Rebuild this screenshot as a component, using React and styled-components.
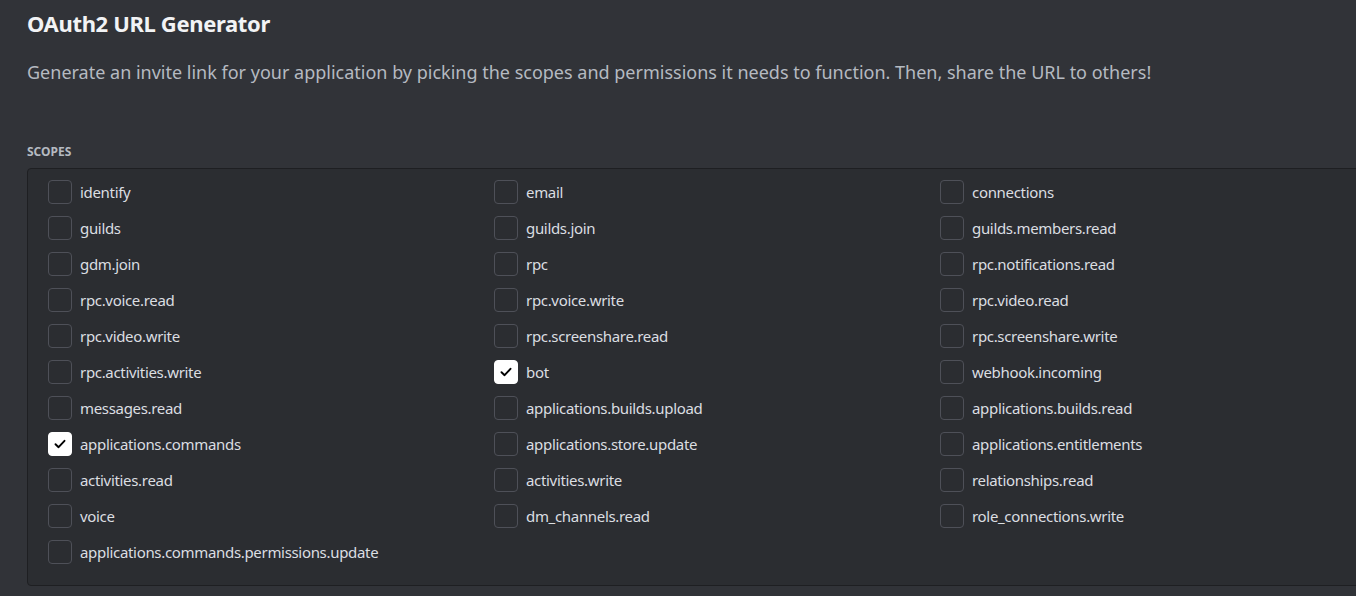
import React from 'react';
import styled, { createGlobalStyle } from 'styled-components';

const GlobalStyle = createGlobalStyle`
  html, body {
    margin: 0;
    background: #313338;
    overflow: hidden;
  }
  body {
    font-family: "Noto Sans", "Open Sans", sans-serif;
  }
`

const Page = styled.div`
  width: 1400px;
  min-height: 596px;
  padding: 9px 0 0 27px;
  box-sizing: border-box;
  background: #313338;
`

const Title = styled.h1`
  margin: 0;
  font-size: 22px;
  line-height: 28px;
  font-weight: 700;
  letter-spacing: -0.35px;
  color: #f2f3f5;
`

const Description = styled.p`
  margin: 23px 0 0;
  font-size: 18px;
  line-height: 24px;
  color: #b5bac1;
`

const SectionLabel = styled.h2`
  margin: 60px 0 8px;
  font-size: 12px;
  line-height: 16px;
  font-weight: 700;
  text-transform: uppercase;
  color: #b5bac1;
`

const ScopeBox = styled.div`
  display: grid;
  grid-template-columns: repeat(3, 446px);
  row-gap: 12px;
  padding: 11px 20px 21px;
  background: #2b2d31;
  border: 1px solid #1e1f22;
  border-radius: 4px;
`

const Scope = styled.label`
  display: flex;
  align-items: center;
  gap: 8px;
  height: 24px;
  font-size: 15px;
  letter-spacing: -0.32px;
  color: #dbdee1;
  cursor: pointer;
`

const Box = styled.span`
  display: flex;
  align-items: center;
  justify-content: center;
  width: 24px;
  height: 24px;
  box-sizing: border-box;
  border-radius: 4px;
  border: 1px solid ${p => (p.$checked ? '#ffffff' : '#4e5058')};
  background: ${p => (p.$checked ? '#ffffff' : 'transparent')};
`

const scopes = [
  'identify', 'email', 'connections',
  'guilds', 'guilds.join', 'guilds.members.read',
  'gdm.join', 'rpc', 'rpc.notifications.read',
  'rpc.voice.read', 'rpc.voice.write', 'rpc.video.read',
  'rpc.video.write', 'rpc.screenshare.read', 'rpc.screenshare.write',
  'rpc.activities.write', 'bot', 'webhook.incoming',
  'messages.read', 'applications.builds.upload', 'applications.builds.read',
  'applications.commands', 'applications.store.update', 'applications.entitlements',
  'activities.read', 'activities.write', 'relationships.read',
  'voice', 'dm_channels.read', 'role_connections.write',
  'applications.commands.permissions.update',
]

const checked = ['bot', 'applications.commands']

const Check = () => (
  <svg width="14" height="14" viewBox="0 0 14 14">
    <path d="M2.5 7.2 L5.6 10.2 L11.5 3.8" fill="none" stroke="#000" strokeWidth="1.9" strokeLinecap="round" strokeLinejoin="round" />
  </svg>
)

export default function App() {
  return (
    <Page>
      <GlobalStyle />
      <Title>OAuth2 URL Generator</Title>
      <Description>
        Generate an invite link for your application by picking the scopes and permissions it needs to function. Then, share the URL to others!
      </Description>
      <SectionLabel>Scopes</SectionLabel>
      <ScopeBox>
        {scopes.map(name => {
          const on = checked.includes(name)
          return (
            <Scope key={name}>
              <Box $checked={on}>{on && <Check />}</Box>
              {name}
            </Scope>
          )
        })}
      </ScopeBox>
    </Page>
  )
}
